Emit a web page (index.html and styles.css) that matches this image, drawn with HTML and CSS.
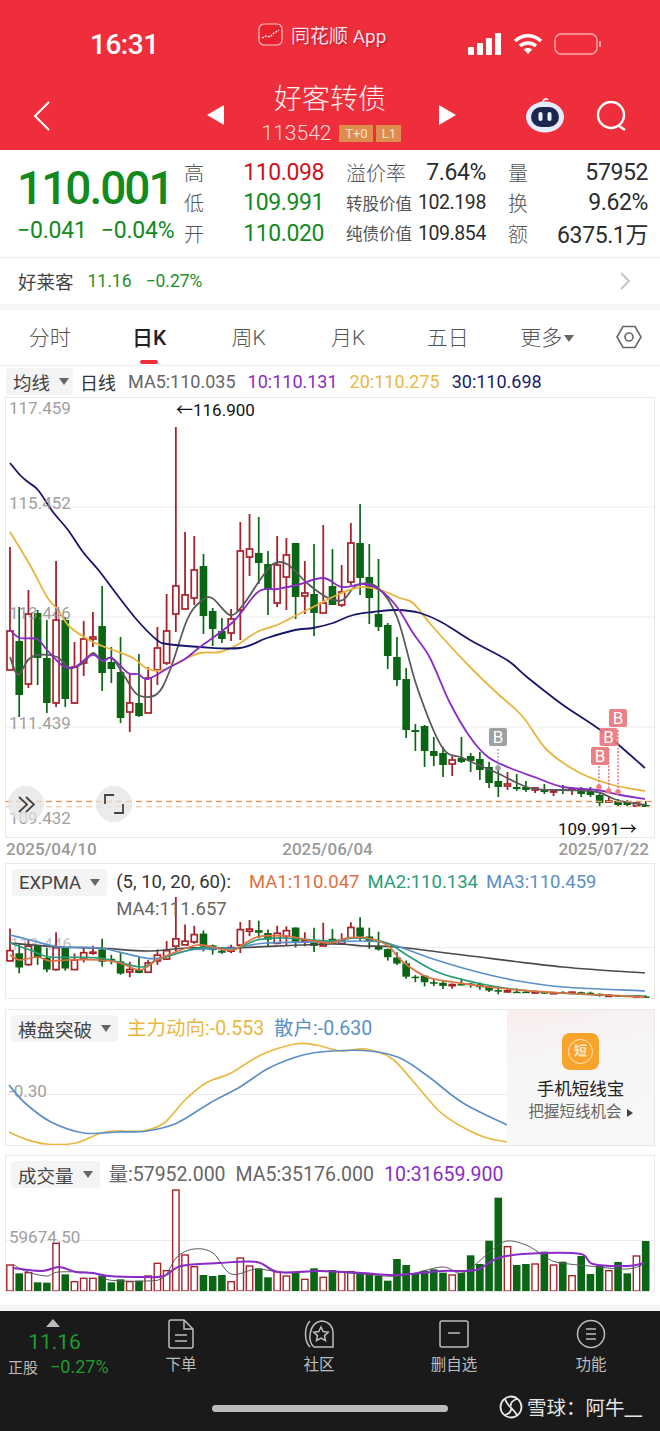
FILE: index.html
```html
<!DOCTYPE html>
<html lang="zh-CN">

<head>
  <meta charset="UTF-8">
  <meta name="viewport" content="width=device-width, initial-scale=1.0">
  <title>好客转债</title>
  <link rel="stylesheet" href="styles.css">
</head>

<body>
  <header class="top">
    <div class="status">
      <span class="time">16:31</span>
      <div class="app-name">
        <svg class="app-icon" width="25" height="23" viewBox="0 0 25 23">
          <rect x="1" y="1" width="23" height="21" rx="5" fill="#e8222e" stroke="#f9c3c6" stroke-width="1.2"/>
          <path d="M4 15l4-2 4 1 4-4 5-3" fill="none" stroke="#fff" stroke-width="1.3" stroke-dasharray="2 1.2"/>
        </svg>
        <span>同花顺 App</span>
      </div>
      <div class="status-icons">
        <svg width="34" height="22" viewBox="0 0 34 22" fill="#fff">
          <rect x="0" y="14" width="6" height="8" rx="1"/>
          <rect x="9" y="10" width="6" height="12" rx="1"/>
          <rect x="18" y="5" width="6" height="17" rx="1"/>
          <rect x="27" y="0" width="6" height="22" rx="1"/>
        </svg>
        <svg width="30" height="22" viewBox="0 0 30 22" fill="none" stroke="#fff" stroke-width="3.4">
          <path d="M2 8c7.500-7 18.500-7 26 0"/>
          <path d="M7 13c4.500-4 11.500-4 16 0"/>
          <path d="M15 21l-4.200-4.500c2.400-2 6-2 8.400 0z" fill="#fff" stroke="none"/>
        </svg>
        <svg width="48" height="22" viewBox="0 0 48 22" fill="none">
          <rect x="1" y="1" width="42" height="20" rx="6" stroke="#f7a9ae" stroke-width="1.4"/>
          <rect x="45" y="8" width="2" height="6" rx="1" fill="#f7a9ae"/>
        </svg>
      </div>
    </div>

    <div class="nav">
      <svg class="back" width="18" height="30" viewBox="0 0 18 30" fill="none" stroke="#fff" stroke-width="2">
        <path d="M16 1L2 15l14 14"/>
      </svg>
      <svg class="arrow-prev" width="18" height="20" viewBox="0 0 18 20" fill="#fff"><path d="M17 0v20L0 10z"/></svg>
      <div class="title-block">
        <div class="title">好客转债</div>
        <div class="code-row">
          <span class="code">113542</span>
          <span class="badge">T+0</span>
          <span class="badge badge-l1">L1</span>
        </div>
      </div>
      <svg class="arrow-next" width="18" height="20" viewBox="0 0 18 20" fill="#fff"><path d="M1 0v20l17-10z"/></svg>
      <svg class="robot" width="40" height="36" viewBox="0 0 40 36">
        <path d="M18 5c0-3 4-4 5-2" fill="none" stroke="#e9eefc" stroke-width="1.600"/>
        <ellipse cx="20" cy="20" rx="19" ry="15.500" fill="#e6ecff"/>
        <rect x="6" y="10" width="28" height="20" rx="10" fill="#1c2750"/>
        <rect x="13.500" y="15" width="4" height="9" rx="2" fill="#eaf2ff"/>
        <rect x="22.500" y="15" width="4" height="9" rx="2" fill="#eaf2ff"/>
      </svg>
      <svg class="search" width="32" height="32" viewBox="0 0 32 32" fill="none" stroke="#fff" stroke-width="2.400">
        <circle cx="15" cy="15" r="13"/>
        <path d="M23 26l6 4"/>
      </svg>
    </div>
  </header>

  <section class="quote">
    <div class="price-box">
      <div class="price">110.001</div>
      <div class="change"><span>−0.041</span><span>−0.04%</span></div>
    </div>
    <div class="stats">
      <div class="stat"><span class="stat-label">高</span><span class="stat-val up">110.098</span></div>
      <div class="stat"><span class="stat-label">溢价率</span><span class="stat-val">7.64%</span></div>
      <div class="stat"><span class="stat-label">量</span><span class="stat-val">57952</span></div>
      <div class="stat"><span class="stat-label">低</span><span class="stat-val down">109.991</span></div>
      <div class="stat"><span class="stat-label small">转股价值</span><span class="stat-val mid">102.198</span></div>
      <div class="stat"><span class="stat-label">换</span><span class="stat-val">9.62%</span></div>
      <div class="stat"><span class="stat-label">开</span><span class="stat-val down">110.020</span></div>
      <div class="stat"><span class="stat-label small">纯债价值</span><span class="stat-val mid">109.854</span></div>
      <div class="stat"><span class="stat-label">额</span><span class="stat-val">6375.1万</span></div>
    </div>
  </section>

  <section class="stock-bar">
    <span class="stock-name">好莱客</span>
    <span class="stock-num">11.16</span>
    <span class="stock-num">−0.27%</span>
    <svg class="stock-more" width="12" height="18" viewBox="0 0 12 18" fill="none" stroke="#c4c4c4" stroke-width="2">
      <path d="M2 1l8 8-8 8"/>
    </svg>
  </section>

  <nav class="tabs">
    <a class="tab">分时</a>
    <a class="tab active">日K</a>
    <a class="tab">周K</a>
    <a class="tab">月K</a>
    <a class="tab">五日</a>
    <a class="tab">更多<i class="tab-caret"></i></a>
    <svg class="tab-gear" width="26" height="24" viewBox="0 0 26 24" fill="none" stroke="#666" stroke-width="1.600">
      <path d="M1 12L7 1.500h12L25 12l-6 10.500H7z"/>
      <circle cx="13" cy="12" r="4"/>
    </svg>
  </nav>

  <div class="indicator-row">
    <span class="picker picker-ma">均线<i class="caret"></i></span>
    <span class="ind-name">日线</span>
    <span class="c-gray">MA5:110.035</span>
    <span class="c-purple">10:110.131</span>
    <span class="c-yellow">20:110.275</span>
    <span class="c-navy">30:110.698</span>
  </div>

  <main class="charts">
    <div class="panel panel-main">
      <svg class="plot" width="650" height="441" viewBox="5 397 650 441">
        <g class="grid">
          <path d="M6 507H655M6 617H655M6 727H655"/>
        </g>
        <g id="mainCandles"></g>
        <g id="mainLines"></g>
        <g class="axis">
          <text x="9" y="414">117.459</text>
          <text x="9" y="509">115.452</text>
          <text x="9" y="619">113.446</text>
          <text x="9" y="729">111.439</text>
          <text x="9" y="824">109.432</text>
        </g>
        <path d="M6 801.500H655" stroke="#e59a62" stroke-width="1.500" stroke-dasharray="6 4" fill="none"/>
        <path d="M6 806.800H655" stroke="#f0c0a0" stroke-width="1" stroke-dasharray="6 4" fill="none"/>
        <text class="note" x="176" y="416">←116.900</text>
        <text class="note" x="558" y="835">109.991→</text>

        <g class="mark mark-gray">
          <path d="M498 749V768"/>
          <circle cx="498" cy="768" r="2.800"/>
          <rect x="489" y="728" width="18" height="18" rx="2"/>
          <text x="498" y="743">B</text>
        </g>
        <g class="mark mark-pink">
          <path d="M599 766V787M608.700 748V791M618 730V792"/>
          <circle cx="599" cy="787" r="2.800"/>
          <circle cx="608.700" cy="791" r="2.800"/>
          <circle cx="618" cy="792" r="2.800"/>
          <rect x="591" y="747" width="18" height="18" rx="2"/>
          <text x="600" y="762">B</text>
          <rect x="599.500" y="728" width="18" height="18" rx="2"/>
          <text x="608.500" y="743">B</text>
          <rect x="609" y="709" width="18" height="18" rx="2"/>
          <text x="618" y="724">B</text>
        </g>

        <g class="float-btn">
          <circle cx="26" cy="804" r="18"/>
          <path d="M19 797l8 7.500-8 7.500M26 797l8 7.500-8 7.500"/>
          <circle cx="114" cy="804" r="18"/>
          <path d="M105 804v-9h9M123 804v9h-9"/>
        </g>
      </svg>
    </div>
    <div class="dates"><span>2025/04/10</span><span>2025/06/04</span><span>2025/07/22</span></div>

    <div class="panel panel-expma">
      <svg class="plot" width="650" height="136" viewBox="5 863 650 136">
        <path class="grid-line" d="M6 947.500H655"/>
        <text class="axis-faint" x="10" y="950">113.446</text>
        <g id="expmaCandles"></g>
        <g id="expmaLines"></g>
      </svg>
      <div class="panel-head">
        <span class="picker">EXPMA<i class="caret"></i></span>
        <div class="legend legend-expma">
          <span class="c-dark legend-params">(5, 10, 20, 60):</span>
          <span class="c-orange">MA1:110.047</span>
          <span class="c-green">MA2:110.134</span>
          <span class="c-blue">MA3:110.459</span>
          <span class="c-gray">MA4:111.657</span>
        </div>
      </div>
    </div>

    <div class="panel panel-break">
      <svg class="plot" width="650" height="137" viewBox="5 1009 650 137">
        <path class="grid-line" d="M6 1094.500H655"/>
        <g class="axis"><text x="9" y="1097">-0.30</text></g>
        <g id="breakLines"></g>
      </svg>
      <div class="panel-head">
        <span class="picker">横盘突破<i class="caret"></i></span>
        <div class="legend">
          <span class="c-yellow">主力动向:-0.553</span>
          <span class="c-blue">散户:-0.630</span>
        </div>
      </div>
      <aside class="promo">
        <div class="promo-icon"><span>短</span></div>
        <div class="promo-title">手机短线宝</div>
        <div class="promo-sub">把握短线机会<i class="promo-caret"></i></div>
      </aside>
    </div>

    <div class="panel panel-vol">
      <svg class="plot" width="650" height="137" viewBox="5 1155 650 137">
        <path class="grid-line" d="M6 1240.500H655"/>
        <g id="volBars"></g>
        <g id="volLines"></g>
        <g class="axis"><text x="9" y="1243">59674.50</text></g>
      </svg>
      <div class="panel-head">
        <span class="picker">成交量<i class="caret"></i></span>
        <div class="legend">
          <span class="c-gray">量:57952.000</span>
          <span class="c-gray">MA5:35176.000</span>
          <span class="c-purple">10:31659.900</span>
        </div>
      </div>
    </div>
  </main>

  <footer class="bottom">
    <div class="bottom-tabs">
      <div class="under">
        <i class="under-arrow"></i>
        <div class="under-price">11.16</div>
        <div class="under-row"><span class="under-name">正股</span><span class="under-pct">−0.27%</span></div>
      </div>
      <div class="bottom-item item-order">
        <svg width="28" height="30" viewBox="0 0 28 30" fill="none" stroke="#bdbdbd" stroke-width="1.500">
          <path d="M2 3a2 2 0 012-2h13l9 9v17a2 2 0 01-2 2H4a2 2 0 01-2-2zM17 1v9h9M8 16h12M8 22h12"/>
        </svg>
        <span>下单</span>
      </div>
      <div class="bottom-item item-community">
        <svg width="32" height="30" viewBox="0 0 32 30" fill="none" stroke="#bdbdbd" stroke-width="1.500">
          <path d="M7 2C1 8 1 22 7 28M11 28C4 22 6 4 18 2c7 0 12 5 12 12v14z"/>
          <path d="M18 8l2.200 4.600 5 .6-3.700 3.400 1 5-4.500-2.500-4.500 2.500 1-5-3.700-3.400 5-.6z"/>
        </svg>
        <span>社区</span>
      </div>
      <div class="bottom-item item-remove">
        <svg width="30" height="30" viewBox="0 0 30 30" fill="none" stroke="#bdbdbd" stroke-width="1.500">
          <rect x="1" y="2" width="28" height="26" rx="2"/>
          <path d="M9 14h12"/>
        </svg>
        <span>删自选</span>
      </div>
      <div class="bottom-item item-func">
        <svg width="30" height="30" viewBox="0 0 30 30" fill="none" stroke="#bdbdbd" stroke-width="1.500">
          <circle cx="15" cy="15" r="13.500"/>
          <path d="M10 10h10M10 15h10M10 20h10"/>
        </svg>
        <span>功能</span>
      </div>
    </div>
    <div class="home-bar"></div>
    <div class="watermark">
      <svg width="24" height="24" viewBox="0 0 24 24" fill="none" stroke="#e6e6e6" stroke-width="1.800">
        <circle cx="12" cy="12" r="10.500"/>
        <path d="M6 4c2 7 8 9 12 16M18 4c-4 1-7 4-6 7M6 20c4-1 7-4 6-8"/>
      </svg>
      <span>雪球：阿牛__</span>
    </div>
  </footer>

  <script src="chart.js"></script>
</body>
</html>
```

FILE: styles.css
```css
* {
  box-sizing: border-box;
}
html, body {
  margin: 0;
  padding: 0;
}
body {
  width: 660px;
  height: 1431px;
  overflow: hidden;
  background-color: #fff;
  font-family: Roboto, "Noto Sans CJK SC", sans-serif;
  color: #333;
}

/* red header */
.top {
  height: 150px;
  background-color: #ee2f3b;
  color: #fff;
}
.status {
  height: 76px;
  display: flex;
  position: relative;
}
.time {
  width: 168px;
  margin-left: 90px;
  margin-top: 28px;
  font-size: 28px;
  line-height: 34px;
  font-weight: 500;
  letter-spacing: -0.5px;
}
.app-name {
  width: 210px;
  height: 24px;
  margin-top: 22px;
  display: flex;
  align-items: center;
  gap: 8px;
  font-size: 19px;
  color: #fde;
  text-shadow: 1px 1px 2px rgba(120, 0, 0, 0.5);
}
.status-icons {
  display: flex;
  align-items: center;
  gap: 11px;
  height: 22px;
  margin-top: 33px;
}
.nav {
  height: 74px;
  display: flex;
  align-items: flex-start;
}
.back {
  margin: 25px 0 0 33px;
}
.arrow-prev {
  margin: 29px 0 0 156px;
}
.title-block {
  width: 213px;
  text-align: center;
}
.title {
  font-size: 28px;
  line-height: 44px;
  font-weight: 300;
  margin-top: 2px;
  margin-left: -3px;
  color: #fdeeee;
}
.code-row {
  display: flex;
  justify-content: center;
  align-items: center;
  gap: 3px;
  margin-top: -1px;
  height: 24px;
}
.code {
  font-size: 21px;
  font-weight: 300;
  margin-right: 5px;
  color: #fcd9da;
}
.badge {
  width: 34px;
  height: 17px;
  line-height: 17px;
  font-size: 13px;
  text-align: center;
  background-color: #df8c4f;
  color: #fbe3c8;
}
.badge-l1 {
  width: 25px;
}
.arrow-next {
  margin: 29px 0 0 0;
}
.robot {
  margin: 21px 0 0 69px;
}
.search {
  margin: 24px 0 0 31px;
}

/* quote block */
.quote {
  height: 107px;
  display: flex;
}
.price-box {
  width: 184px;
  padding: 14px 0 0 17px;
}
.price {
  font-size: 46px;
  line-height: 48px;
  letter-spacing: -2px;
  font-weight: 500;
  color: #128a1e;
}
.change {
  display: flex;
  gap: 14px;
  margin-top: 6px;
  font-size: 23px;
  line-height: 26px;
  letter-spacing: -0.2px;
  color: #128a1e;
}
.stats {
  display: grid;
  grid-template-columns: repeat(3, 140px);
  column-gap: 22px;
  grid-auto-rows: 30.500px;
  padding-top: 7px;
}
.stat {
  display: flex;
  justify-content: space-between;
  align-items: center;
}
.stat-label {
  font-size: 20px;
  font-weight: 300;
  color: #555;
  white-space: nowrap;
}
.stat-label.small {
  font-size: 16.500px;
  font-weight: 400;
  color: #555;
}
.stat-val {
  font-size: 23px;
  letter-spacing: -0.4px;
  color: #2c2c2c;
}
.stat-val.mid {
  font-size: 19.500px;
}
.stat-val.up {
  color: #d0111b;
}
.stat-val.down {
  color: #128a1e;
}

/* underlying stock */
.stock-bar {
  height: 53px;
  border-top: 1px solid #eee;
  border-bottom: 6px solid #f5f5f5;
  padding-left: 18px;
  display: flex;
  align-items: center;
  gap: 14px;
  position: relative;
}
.stock-name {
  font-size: 18.500px;
  color: #444;
}
.stock-num {
  font-size: 17.500px;
  color: #1f8f2e;
}
.stock-more {
  margin-left: auto;
  margin-right: 29px;
}

/* period tabs */
.tabs {
  height: 56px;
  display: flex;
  align-items: center;
  border-bottom: 1px solid #eee;
}
.tab {
  width: 99.500px;
  height: 55px;
  line-height: 56px;
  text-align: center;
  font-size: 21px;
  font-weight: 300;
  color: #555;
  position: relative;
}
.tab.active {
  font-weight: 500;
  color: #222;
}
.tab.active::after {
  content: "";
  position: absolute;
  left: 40px;
  bottom: 1px;
  width: 18px;
  height: 4px;
  border-radius: 2px;
  background-color: #ee2f3b;
}
.tab-caret {
  display: inline-block;
  margin-left: 2px;
  vertical-align: 3px;
  border: 5px solid transparent;
  border-top: 7px solid #666;
  border-bottom: 0;
}
.tab-gear {
  margin-left: 19px;
  margin-top: -2px;
}

/* legends */
.indicator-row {
  height: 31px;
  padding-left: 6px;
  display: flex;
  align-items: center;
  font-size: 18px;
  gap: 12px;
}
.ind-name {
  margin-left: -5px;
  color: #333;
}
.picker {
  height: 27px;
  padding: 0 7px;
  display: flex;
  align-items: center;
  gap: 9px;
  background-color: #f4f4f4;
  border-radius: 4px;
  font-size: 18.500px;
  color: #444;
  white-space: nowrap;
}
.picker-ma {
  padding-right: 4px;
}
.caret {
  border: 5px solid transparent;
  border-top: 7px solid #666;
  border-bottom: 0;
}
.c-gray { color: #666; }
.c-dark { color: #333; }
.c-purple { color: #8a2bc8; }
.c-yellow { color: #e9b840; }
.c-navy { color: #1b1b6b; }
.c-orange { color: #e07040; }
.c-green { color: #2a9d78; }
.c-blue { color: #5b8fc9; }

/* chart panels */
.charts {
  padding: 0 5px;
}
.panel {
  position: relative;
  width: 650px;
  outline: 1px solid #e9e9e9;
  outline-offset: -1px;
}
.plot {
  display: block;
}
.panel-main { height: 441px; }
.panel-expma { height: 136px; margin-top: 3px; }
.panel-break { height: 137px; margin-top: 10px; }
.panel-vol { height: 137px; margin-top: 9px; }
.dates {
  height: 22px;
  display: flex;
  justify-content: space-between;
  padding: 0 6px 0 1px;
  font-size: 17px;
  line-height: 23px;
  font-weight: 500;
  color: #999;
}
.grid path, .grid-line {
  fill: none;
  stroke: #ececec;
  stroke-width: 1;
}
.axis text {
  font-size: 17px;
  fill: #8f8f8f;
  opacity: 0.85;
}
.axis-faint {
  font-size: 17px;
  fill: #c4c4cc;
}
.note {
  font-size: 17px;
  fill: #111;
}
.mark text {
  font-size: 17px;
  text-anchor: middle;
  fill: #fff;
}
.mark path {
  fill: none;
  stroke-width: 1.500;
  stroke-dasharray: 2 1.500;
}
.mark-gray path { stroke: #a5a5a5; }
.mark-gray circle, .mark-gray rect { fill: #a0a0a0; }
.mark-pink path { stroke: #e9787e; }
.mark-pink circle, .mark-pink rect { fill: #ea777d; fill-opacity: 0.92; }
.float-btn circle {
  fill: #e4e4e4;
  fill-opacity: 0.75;
}
.float-btn path {
  fill: none;
  stroke: #444;
  stroke-width: 1.800;
}
.panel-head {
  position: absolute;
  top: 6px;
  left: 7px;
  display: flex;
  gap: 9px;
}
.legend {
  display: flex;
  flex-wrap: wrap;
  gap: 0 10px;
  width: 500px;
  font-size: 19.500px;
  line-height: 27px;
}
.legend-expma {
  font-size: 18.500px;
  gap: 0 8px;
  width: 510px;
}
.legend-params {
  margin-right: 10px;
}
.panel-vol .panel-head, .panel-break .panel-head {
  left: 6px;
}
.promo {
  position: absolute;
  top: 1px;
  right: 1px;
  bottom: 1px;
  width: 147px;
  padding-top: 23px;
  background: linear-gradient(170deg, #f9eeee 0%, #f6f6f6 40%, #f8f8f8 100%);
  text-align: center;
}
.promo-icon {
  width: 37px;
  height: 37px;
  margin: 0 auto;
  border-radius: 8px;
  background-color: #f7a32c;
  display: flex;
  align-items: center;
  justify-content: center;
}
.promo-icon span {
  width: 25px;
  height: 25px;
  line-height: 22px;
  border: 1.500px solid #ffe9c4;
  border-radius: 50%;
  font-size: 13px;
  font-weight: 700;
  color: #ffe9c4;
}
.promo-title {
  margin-top: 7px;
  font-size: 17.500px;
  line-height: 24px;
  color: #222;
}
.promo-sub {
  font-size: 15.500px;
  line-height: 22px;
  color: #666;
}
.promo-caret {
  display: inline-block;
  margin-left: 5px;
  border: 4.500px solid transparent;
  border-left: 6px solid #444;
  border-right: 0;
}

/* bottom bar */
.bottom {
  position: absolute;
  left: 0;
  right: 0;
  top: 1305px;
  height: 126px;
  border-top: 6px solid #f5f5f5;
  background-color: #1a1a1a;
}
.bottom-tabs {
  display: flex;
  height: 66px;
}
.under {
  width: 112px;
  padding-top: 8px;
  text-align: center;
}
.under-arrow {
  display: block;
  width: 0;
  margin: 0 0 0 46px;
  border: 7px solid transparent;
  border-bottom: 8px solid #bbb;
  border-top: 0;
}
.under-price {
  margin: 2px 0 0 0;
  padding-right: 3px;
  font-size: 21px;
  line-height: 26px;
  color: #1f9a30;
}
.under-row {
  display: flex;
  gap: 12px;
  padding-left: 8px;
  align-items: center;
  height: 22px;
}
.under-name {
  font-size: 15px;
  color: #bbb;
}
.under-pct {
  font-size: 18px;
  color: #1f9a30;
}
.bottom-item {
  position: absolute;
  top: 8px;
  width: 80px;
  display: flex;
  flex-direction: column;
  align-items: center;
  gap: 3px;
  font-size: 15.500px;
  color: #bdbdbd;
}
.item-order { left: 141px; }
.item-community { left: 279px; }
.item-remove { left: 414px; }
.item-func { left: 551px; }
.home-bar {
  position: absolute;
  left: 212px;
  top: 94px;
  width: 236px;
  height: 7px;
  border-radius: 4px;
  background-color: #bcbcbc;
}
.watermark {
  position: absolute;
  left: 499px;
  top: 81px;
  display: flex;
  align-items: center;
  gap: 4px;
  font-size: 19.500px;
  color: #e6e6e6;
  white-space: nowrap;
}
```

FILE: chart.js
```js
// candles in page pixels: high, body top, body bottom, low, r/g
const candles = [
  [547, 631, 670, 670, 'r'], [607, 641, 695, 717, 'g'], [590, 614, 684, 688, 'r'], [610, 613, 658, 685, 'g'],
  [620, 658, 703, 713, 'g'], [561, 620, 703, 707, 'r'], [617, 620, 699, 707, 'g'], [642, 667, 703, 704, 'r'],
  [621, 639, 663, 676, 'r'], [612, 637, 639, 647, 'r'], [586, 626, 673, 691, 'g'], [647, 662, 669, 683, 'g'],
  [637, 672, 718, 723, 'g'], [673, 703, 712, 732, 'r'], [654, 703, 716, 717, 'g'], [667, 678, 713, 713, 'r'],
  [627, 648, 670, 685, 'r'], [594, 631, 663, 665, 'r'], [427, 586, 614, 632, 'r'], [532, 595, 609, 609, 'r'],
  [536, 570, 598, 605, 'r'], [554, 566, 616, 634, 'g'], [608, 611, 629, 646, 'g'], [618, 631, 639, 643, 'g'],
  [609, 619, 633, 641, 'r'], [522, 551, 610, 640, 'r'], [514, 549, 557, 576, 'r'], [517, 553, 563, 584, 'g'],
  [551, 564, 589, 615, 'g'], [536, 565, 603, 607, 'r'], [538, 555, 577, 610, 'r'], [543, 543, 597, 619, 'g'],
  [561, 593, 596, 614, 'r'], [544, 594, 613, 636, 'g'], [525, 603, 613, 613, 'r'], [549, 586, 605, 605, 'g'],
  [565, 592, 605, 607, 'r'], [523, 543, 582, 585, 'r'], [504, 543, 578, 595, 'g'], [544, 577, 598, 624, 'g'],
  [559, 614, 627, 631, 'g'], [623, 625, 656, 669, 'g'], [637, 657, 680, 686, 'g'], [668, 679, 730, 738, 'g'],
  [724, 730, 732, 751, 'g'], [725, 726, 751, 767, 'g'], [737, 751, 756, 766, 'g'], [747, 753, 765, 777, 'g'],
  [756, 760, 764, 776, 'r'], [737, 758, 762, 763, 'g'], [753, 756, 761, 772, 'g'], [752, 759, 770, 780, 'g'],
  [762, 767, 783, 788, 'g'], [767, 781, 787, 797, 'g'], [772, 784, 786, 790, 'r'], [774, 787, 789, 791, 'g'],
  [781, 787, 790, 792, 'g'], [787, 788, 790, 793, 'r'], [784, 789, 792, 794, 'g'], [789, 791, 792, 796, 'r'],
  [785, 789, 791, 794, 'g'], [787, 789, 790, 795, 'r'], [787, 789, 794, 797, 'g'], [787, 791, 795, 797, 'g'],
  [794, 795, 803, 806, 'g'], [797, 801, 802, 803, 'r'], [799, 801, 805, 806, 'g'], [800, 802, 805, 806, 'g'],
  [802, 803, 806, 807, 'r'], [801, 805, 807, 807, 'g']
];

const barTops = [345, 370, 368, 397, 398, 280, 373, 395, 385, 385, 378, 397, 388, 395, 392, 378, 340, 362, 120, 315,
  350, 375, 378, 375, 395, 324, 348, 355, 382, 365, 378, 365, 388, 355, 382, 360, 365, 365, 370, 372,
  378, 392, 327, 345, 370, 362, 358, 368, 375, 368, 316, 342, 272, 143, 290, 345, 342, 342, 305, 345,
  335, 377, 318, 372, 348, 362, 336, 370, 318, 273];

const mainLines = [
  ['#5a5a5a', [[10,657],[18,675],[28,660],[38,655],[57,657],[70,668],[83,663],[93,653],[102,661],[112,658],[125,677],[138,695],[157,694],[170,670],[187,620],[200,602],[212,598],[230,615],[243,605],[260,580],[273,564],[287,564],[307,583],[328,598],[343,600],[357,585],[377,587],[397,617],[417,687],[442,747],[463,758],[497,773],[530,788],[563,790],[597,792],[617,800],[645,805]]],
  ['#e8b53c', [[10,532],[30,565],[47,597],[58,610],[70,627],[93,642],[113,650],[133,658],[148,669],[163,670],[183,660],[200,653],[220,652],[237,645],[257,632],[277,625],[297,615],[317,605],[337,595],[360,587],[380,590],[400,598],[413,603],[433,627],[470,667],[497,693],[523,717],[547,750],[580,773],[613,785],[645,791]]],
  ['#17176a', [[10,463],[20,475],[28,482],[38,490],[53,512],[68,530],[83,552],[100,572],[115,592],[137,620],[157,640],[167,644],[200,647],[240,648],[267,638],[295,630],[313,628],[333,623],[353,615],[373,612],[397,610],[420,613],[443,623],[470,640],[507,660],[527,677],[563,705],[603,732],[645,768]]],
  ['#8a2bc8', [[10,630],[20,638],[37,639],[47,650],[63,666],[75,667],[92,655],[103,661],[112,658],[128,673],[138,674],[148,679],[170,667],[185,659],[200,647],[233,622],[258,592],[277,589],[297,585],[323,578],[342,587],[363,584],[380,590],[397,607],[413,633],[430,658],[450,703],[470,737],[488,757],[510,768],[537,778],[563,787],[597,790],[620,795],[645,799]]]
];

const expmaLines = [
  ['#4a4a4a', [[10,943],[60,947],[100,948],[147,951],[187,948],[233,948],[330,944],[363,946],[397,947],[463,955],[563,967],[645,973]]],
  ['#5b8fc9', [[10,935],[30,940],[60,947],[100,948],[140,957],[160,958],[190,950],[233,948],[267,943],[330,942],[357,941],[380,942],[400,947],[430,958],[470,970],[513,980],[563,987],[645,991]]],
  ['#2a9d78', [[10,943],[30,950],[50,957],[100,958],[140,967],[157,960],[190,950],[213,947],[233,950],[257,940],[283,938],[330,941],[357,938],[387,943],[410,957],[440,973],[487,985],[530,991],[597,995],[645,996]]],
  ['#e07040', [[10,955],[20,960],[37,957],[50,961],[67,960],[100,960],[120,963],[140,970],[157,960],[173,953],[197,945],[213,947],[233,950],[257,937],[287,936],[307,940],[330,943],[347,938],[367,938],[387,945],[403,962],[427,977],[453,982],[497,988],[563,993],[645,997]]]
];

const breakLines = [
  ['#e9b840', [[9,1132],[25,1139],[46,1144],[76,1143],[101,1133],[118,1131],[143,1131],[164,1123],[185,1100],[206,1083],[231,1073],[261,1055],[295,1044],[316,1045],[341,1051],[366,1049],[391,1058],[412,1080],[438,1110],[459,1125],[484,1137],[507,1142]]],
  ['#5b8fc9', [[9,1085],[25,1103],[51,1122],[84,1133],[118,1132],[147,1131],[177,1123],[210,1103],[240,1087],[269,1068],[303,1055],[332,1051],[370,1051],[400,1058],[429,1077],[463,1103],[507,1125]]]
];

const volLines = [
  ['#5a5a5a', [[13,1264],[25,1271],[46,1276],[59,1272],[93,1273],[109,1280],[147,1281],[164,1277],[177,1257],[194,1249],[213,1253],[231,1274],[257,1269],[286,1273],[320,1271],[362,1274],[400,1276],[442,1267],[463,1273],[492,1250],[507,1241],[526,1245],[543,1255],[556,1262],[589,1266],[627,1269],[644,1264]], 1],
  ['#8a2bc8', [[13,1268],[42,1271],[59,1267],[76,1272],[93,1273],[109,1276],[143,1277],[164,1276],[181,1266],[219,1263],[257,1262],[278,1272],[320,1271],[362,1273],[396,1275],[442,1271],[476,1270],[501,1257],[543,1253],[581,1254],[593,1264],[627,1266],[644,1263]], 2]
];

const RED = '#a8222a';
const GREEN = '#0a6614';

function candleX(i) {
  return 10 + 9.213 * i;
}

function smoothPath(pts) {
  let d = 'M' + pts[0][0] + ' ' + pts[0][1];
  for (let i = 0; i < pts.length - 1; i++) {
    const p0 = pts[i - 1] || pts[i];
    const p1 = pts[i];
    const p2 = pts[i + 1];
    const p3 = pts[i + 2] || p2;
    const c1x = p1[0] + (p2[0] - p0[0]) / 6;
    const c1y = p1[1] + (p2[1] - p0[1]) / 6;
    const c2x = p2[0] - (p3[0] - p1[0]) / 6;
    const c2y = p2[1] - (p3[1] - p1[1]) / 6;
    d += 'C' + [c1x, c1y, c2x, c2y, p2[0], p2[1]].map(n => n.toFixed(1)).join(' ');
  }
  return d;
}

function drawLines(id, lines, width) {
  document.getElementById(id).innerHTML = lines.map(([color, pts, own]) =>
    `<path d="${smoothPath(pts)}" fill="none" stroke="${color}" stroke-width="${own || width}"/>`
  ).join('');
}

function drawCandles(id, mapY) {
  let out = '';
  candles.forEach((c, i) => {
    const x = candleX(i);
    const high = mapY(c[0]);
    const top = mapY(c[1]);
    const bottom = mapY(c[2]);
    const low = mapY(c[3]);
    if (c[4] === 'r') {
      out += `<path d="M${x} ${high}V${top}M${x} ${bottom}V${low}" stroke="${RED}" stroke-width="1.8"/>`;
      out += `<rect x="${x - 3}" y="${top}" width="6" height="${Math.max(bottom - top, 1)}" fill="#fff" stroke="${RED}" stroke-width="1.7"/>`;
    } else {
      out += `<path d="M${x} ${high}V${low}" stroke="${GREEN}" stroke-width="1.7"/>`;
      out += `<rect x="${x - 3.8}" y="${top}" width="7.6" height="${Math.max(bottom - top, 1.5)}" fill="${GREEN}"/>`;
    }
  });
  document.getElementById(id).innerHTML = out;
}

function drawBars() {
  let out = '';
  barTops.forEach((t, i) => {
    const x = candleX(i);
    const top = 1150 + t / 3;
    const h = 1291 - top;
    if (candles[i][4] === 'r') {
      out += `<rect x="${x - 3.2}" y="${top}" width="6.4" height="${h}" fill="#fff" stroke="${RED}" stroke-width="1.4"/>`;
    } else {
      out += `<rect x="${x - 3.8}" y="${top}" width="7.6" height="${h}" fill="${GREEN}"/>`;
    }
  });
  document.getElementById('volBars').innerHTML = out;
}

drawCandles('mainCandles', y => y);
drawCandles('expmaCandles', y => 897 + (y - 427) * 0.263);
drawLines('mainLines', mainLines, 1.8);
drawLines('expmaLines', expmaLines, 1.7);
drawLines('breakLines', breakLines, 1.7);
drawLines('volLines', volLines, 1.7);
drawBars();
```
